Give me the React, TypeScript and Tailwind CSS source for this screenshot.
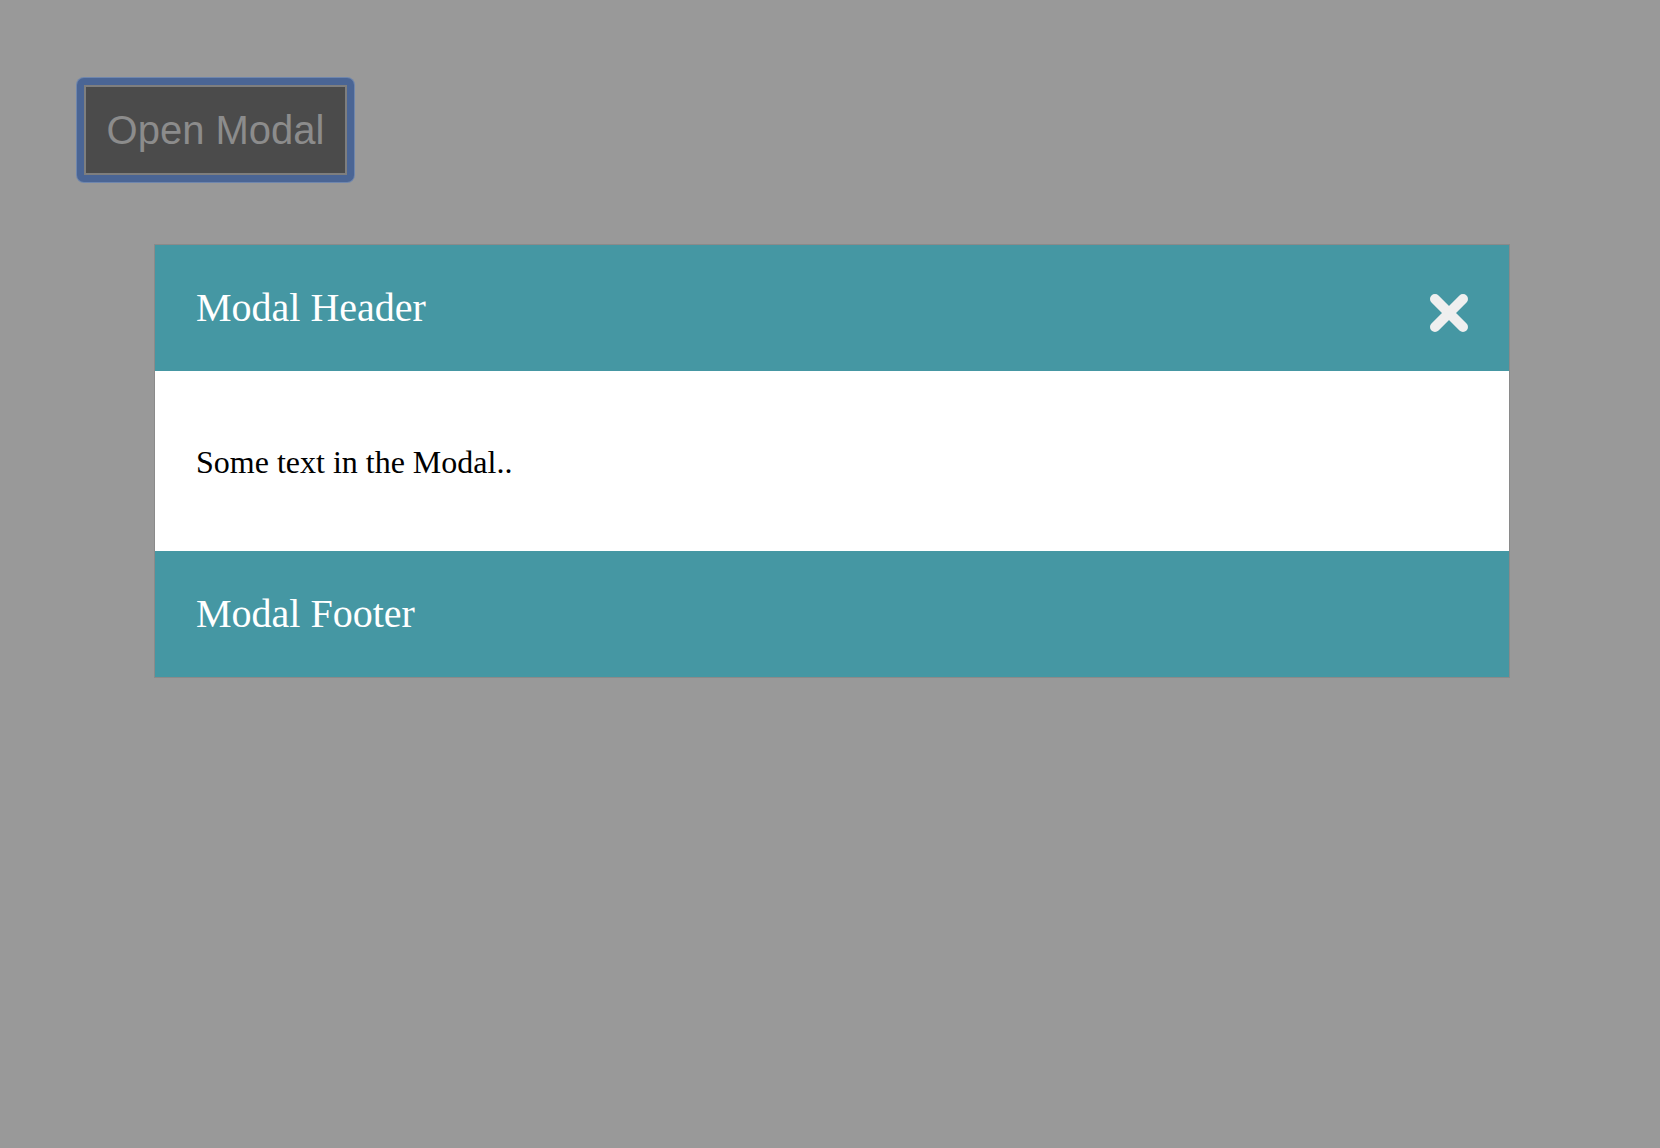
import React from "react";

const CloseIcon = () => (
  <svg width="40" height="40" viewBox="0 0 40 40" className="block">
    <path
      d="M6 6 L34 34 M34 6 L6 34"
      stroke="#efefef"
      strokeWidth="10"
      strokeLinecap="round"
      fill="none"
    />
  </svg>
);

const App = () => {
  return (
    <div className="min-h-screen w-full bg-[#999999] pt-[78px] pb-10">
      <div className="ml-[77px] inline-block rounded-[7px] bg-[#4a6595] p-[7px] shadow-[0_0_0_1px_#6f86ad]">
        <button className="flex h-[90px] w-[263px] items-center justify-center border-2 border-[#7e7e7e] bg-[#4b4b4b] font-['Liberation_Sans',Arial,sans-serif] text-[40px] text-[#8c8c8c]">
          Open Modal
        </button>
      </div>

      <div className="ml-[154px] mt-[62px] w-[1356px] border border-[#8a8a8a] font-['Liberation_Serif','Times_New_Roman',serif]">
        <div className="flex h-[126px] items-center justify-between bg-[#4597a3] pl-[41px] pr-[40px]">
          <h2 className="text-[40px] leading-none text-white">Modal Header</h2>
          <div className="mt-[10px]">
            <CloseIcon />
          </div>
        </div>
        <div className="flex h-[180px] items-center bg-white pl-[41px]">
          <p className="mt-[2px] text-[32px] leading-none text-black">
            Some text in the Modal..
          </p>
        </div>
        <div className="flex h-[126px] items-center bg-[#4597a3] pl-[41px]">
          <h3 className="text-[40px] leading-none text-white">Modal Footer</h3>
        </div>
      </div>
    </div>
  );
};

export default App;
